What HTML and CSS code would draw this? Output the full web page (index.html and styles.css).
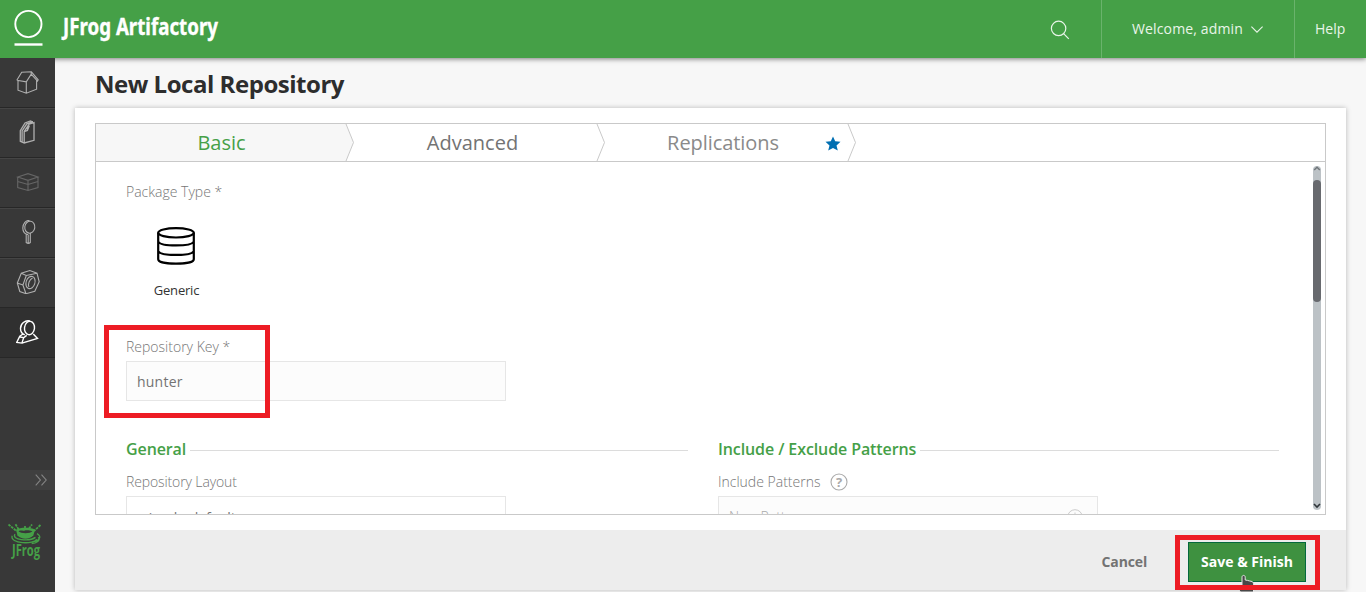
FILE: index.html
```html
<!DOCTYPE html>
<html lang="en">
<head>
<meta charset="utf-8">
<title>New Local Repository</title>
<link rel="stylesheet" href="styles.css">
</head>
<body>
<header class="topbar">
  <svg class="brand" width="230" height="58" viewBox="0 0 230 58">
    <circle cx="28.4" cy="24" r="13.1" fill="none" stroke="#fff" stroke-width="1.9"/>
    <path d="M14.5 44.5h28" stroke="#fff" stroke-width="2.4"/>
    <text class="brand-name" x="63" y="34.5" textLength="155" lengthAdjust="spacingAndGlyphs">JFrog Artifactory</text>
  </svg>
  <div class="top-search">
    <svg width="20" height="20" viewBox="0 0 20 20" fill="none" stroke="#e9f5e9" stroke-width="1.2"><circle cx="8.6" cy="8.4" r="7.2"/><path d="M13.6 13.6l5.2 5.2"/></svg>
  </div>
  <div class="top-user"><span class="user-name">Welcome, admin</span>
    <svg width="12" height="7" viewBox="0 0 12 7" fill="none" stroke="#e9f5e9" stroke-width="1.1"><path d="M.4.6L6 6.2 11.6.6"/></svg>
  </div>
  <div class="top-help">Help</div>
</header>
<div class="body">
  <nav class="sidebar">
    <a class="nav-item"><svg width="24" height="24" viewBox="0 0 24 24"><path d="M.8 10.2L5.7 2.2 15.4 1.8 22.2 9.8 21.5 11 15.2 4.2 10.3 11.8.8 10.2M2 10.8v9.4l8.3 3 10.3-4V9.8M10.3 12v11M15.2 4.2v-2"/></svg></a>
    <a class="nav-item"><svg width="24" height="24" viewBox="0 0 24 24"><path stroke-width="1.3" d="M8.2 23V11.5L13 4.2l5-1.5v17.6L8.2 23 4.3 21.4V10.7L9 3l5.5-2 1.8.8M6.1 22V11L10.8 3.8 17 1.6M11.4 7v4M8.2 11.6l3.2-1.2 2-5M16 .9v2.2"/></svg></a>
    <a class="nav-item dim"><svg width="24" height="24" viewBox="0 0 24 24"><path d="M1.700 7L12 3.700 22 7 12 10.300zM1.700 7v10.500l10.300 3 10-3V7M12 10.300v10.200M1.700 11.500l10.300 3 10-3"/></svg></a>
    <a class="nav-item"><svg width="24" height="24" viewBox="0 0 24 24"><ellipse cx="13.8" cy="7.2" rx="5" ry="6" transform="rotate(8 13.8 7.2)"/><path d="M13.5.5C9.8 0 7 3.5 6.8 8c0 4 1.5 6.1 5.5 6.6M10.2 14v8.5c1.2 1 3 1 4.1 0V13M12.2 15v8"/></svg></a>
    <a class="nav-item"><svg width="24" height="24" viewBox="0 0 24 24"><path d="M1.3 13L5.3 3.3 13.8.6 21 3.2l2.2 8.6-4.4 9.4L10 23.7 3.8 21.5zM5.3 3.3l5 2.2L6.9 15 10 23.7M10.3 5.5L21 3.2M1.3 13l5.6 2"/><ellipse cx="14.5" cy="12.5" rx="4.4" ry="6.3" transform="rotate(18 14.5 12.5)"/><path d="M16.5 8c-3 1.5-5 6-3.5 9"/></svg></a>
    <a class="nav-item active"><svg width="24" height="24" viewBox="0 0 24 24"><ellipse cx="13.5" cy="8" rx="5" ry="6.7" transform="rotate(8 13.5 8)"/><path d="M13.8 1C9 0 4.6 3.5 4.5 8.5c0 3 1.5 5.3 4.3 6.3M7 14L3.8 16.2.7 22.5l5.2.6 1.8-5.5 3-2.2M5.9 23.1l15.6-4.7-4.2-4.4M4 17l3.7.6"/></svg></a>
    <div class="nav-toggle"><svg width="12" height="12" viewBox="0 0 12 12" fill="none" stroke="#858585" stroke-width="1.1"><path d="M.7.7L5.4 6 .7 11.3M6.5.7L11.2 6 6.5 11.3"/></svg></div>
    <div class="nav-logo">
      <svg width="36" height="42" viewBox="0 0 36 42">
        <path d="M9 6.8c4-2.6 15-2.6 19 0l-1.6 5.4c-3.4 4.6-12.6 4.6-16 0z" fill="#45a047"/>
        <path d="M11.5 8.2c3-1.4 4 .2 7-1 3-.2 4 0 7 1-2 2.6-12 2.6-14 0z" fill="#383838"/>
        <path d="M1.5 1.5L9.5 8M8.5 1.2l3 5M22 5.5l3-4M33.5 2L27 8M18 5.5V2" stroke="#45a047" stroke-width="1.8" stroke-dasharray="2.6 .8"/>
        <path d="M8 11.2c-4 5.5 14 7.8 20.5 3.2M5.2 12.8c-3 8 22 9 24.5 3.4M30 10.6c6 3.4 1 7-2.5 8M31.2 14.2c3 3-2 6.2-6.5 6.3" fill="none" stroke="#45a047" stroke-width="1.3"/>
        <text class="frog-name" x="5" y="33" textLength="28" lengthAdjust="spacingAndGlyphs">JFrog</text>
      </svg>
    </div>
  </nav>
  <main class="main">
    <h1 class="title">New Local Repository</h1>
    <section class="panel">
      <div class="wizard">
        <div class="tabs">
          <div class="tab selected">Basic<svg class="arrow" width="10" height="37" viewBox="0 0 10 37"><path d="M1 0l7.5 18.5L1 37"/></svg></div>
          <div class="tab">Advanced<svg class="arrow" width="10" height="37" viewBox="0 0 10 37"><path d="M1 0l7.5 18.5L1 37"/></svg></div>
          <div class="tab muted">Replications
            <svg class="star" width="16" height="15" viewBox="0 0 16 15"><path fill="#006fb2" d="M8 .5l2.2 4.8 5.3.5-4 3.6 1.3 5.2L8 12l-4.8 2.6 1.3-5.2-4-3.6 5.3-.5z"/></svg>
            <svg class="arrow" width="10" height="37" viewBox="0 0 10 37"><path d="M1 0l7.5 18.5L1 37"/></svg></div>
        </div>
        <div class="viewport">
          <div class="form">
            <div class="label package-label">Package Type *</div>
            <div class="package">
              <svg width="40" height="40" viewBox="0 0 40 40" fill="none" stroke="#000" stroke-width="2.2"><ellipse cx="20" cy="6.8" rx="17.8" ry="4.7"/><path d="M2.2 6.8v26.4c0 6 35.6 6 35.6 0V6.8M2.2 15.7c3 5 32.6 5 35.6 0M2.2 25.2c3 5 32.6 5 35.6 0"/></svg>
              <span>Generic</span>
            </div>
            <div class="label key-label">Repository Key *</div>
            <div class="input key">hunter</div>
            <div class="columns">
              <div class="column">
                <h2 class="section">General</h2>
                <div class="label layout-label">Repository Layout</div>
                <div class="input white">simple-default</div>
              </div>
              <div class="column">
                <h2 class="section">Include / Exclude Patterns</h2>
                <div class="label">Include Patterns <svg width="18" height="18" viewBox="0 0 18 18"><circle cx="9" cy="9" r="8" fill="none" stroke="#aaa" stroke-width="1.1"/><text class="mark" x="9" y="13.6">?</text></svg></div>
                <div class="input placeholder">New Pattern<svg width="16" height="16" viewBox="0 0 16 16" fill="none" stroke="#ccc"><circle cx="8" cy="8" r="7.3"/><path d="M8 3.5v9M3.5 8h9"/></svg></div>
              </div>
            </div>
          </div>
          <div class="scrollbar">
            <svg width="8" height="8" viewBox="0 0 8 8" fill="none" stroke="#70767a" stroke-width="1.4"><path d="M1.2 4L4 1.2 6.8 4"/></svg>
            <div class="thumb"></div>
            <svg class="down" width="8" height="8" viewBox="0 0 8 8" fill="none" stroke="#30363a" stroke-width="1.6"><path d="M1 2l3 3 3-3"/></svg>
          </div>
        </div>
      </div>
      <footer class="actions"><span class="cancel">Cancel</span><button class="save">Save &amp; Finish</button></footer>
    </section>
  </main>
</div>
<svg class="cursor" width="20" height="18" viewBox="0 0 20 18"><path d="M6 3.200c0-2.400 3.200-2.400 3.200 0V6l2.300.4 2.200.6 2.300.5c1.200.5 1.500 1.400 1.500 3V18H4.500L1 13.500c-.8-1.500.5-2.500 2-1.500l3 2z" fill="#484848" stroke="#e8e8e8"/></svg>
<div class="highlight key-highlight"></div>
<div class="highlight save-highlight"></div>
</body>
</html>
```
FILE: styles.css
```css
* { box-sizing: border-box; }
body {
  margin: 0;
  height: 592px;
  overflow: hidden;
  display: flex;
  flex-direction: column;
  background: #f7f7f7;
  font: 14px/20px "Open Sans", sans-serif;
  color: #737373;
}
svg { flex: none; }
.topbar {
  height: 58px;
  flex: none;
  display: flex;
  background: #45a047;
  color: #e9f5e9;
  box-shadow: 0 1px 5px rgba(0, 0, 0, .5);
  z-index: 1;
}
.brand { overflow: visible; }
.brand-name { font: 700 23.5px "Noto Sans", sans-serif; fill: #fff; stroke: #fff; stroke-width: .4px; }
.top-search { margin-left: auto; width: 51px; padding-top: 20px; }
.top-user {
  width: 193px;
  display: flex;
  align-items: center;
  gap: 8px;
  padding-left: 30px;
  border-left: 1px solid #6ab36c;
}
.user-name { letter-spacing: .14px; }
.top-help {
  width: 72px;
  display: flex;
  align-items: center;
  padding-left: 20px;
  border-left: 1px solid #6ab36c;
}
.body { flex: 1; min-height: 0; display: flex; }
.sidebar {
  width: 55px;
  flex: none;
  display: flex;
  flex-direction: column;
  background: #383838;
  z-index: 2;
}
.nav-item {
  height: 50px;
  flex: none;
  display: flex;
  align-items: center;
  justify-content: center;
  padding: 0 0 2px 1px;
  border-top: 1px solid #454545;
  border-bottom: 1px solid #272727;
}
.nav-item:first-child { border-top-color: #383838; }
.nav-item svg { fill: none; stroke: #b0b0b0; stroke-width: 1.1; }
.nav-item.dim svg { stroke: #666; }
.nav-item.active { background: #303030; border-top-color: #303030; }
.nav-item.active svg { stroke: #fff; stroke-width: 1.4; }
.nav-toggle {
  margin-top: 112px;
  height: 20px;
  flex: none;
  display: flex;
  align-items: center;
  justify-content: flex-end;
  padding-right: 8px;
  background: #404040;
}
.nav-logo { padding: 33px 0 0 7px; }
.nav-logo svg { display: block; overflow: visible; }
.frog-name { font: 700 15.5px "Open Sans", sans-serif; fill: #45a047; }
.main { flex: 1; padding: 0 20px; }
.title {
  margin: 0;
  height: 50px;
  padding: 9px 0 0 20px;
  font-size: 24px;
  line-height: 34px;
  letter-spacing: -.47px;
  color: #2d2d2d;
}
.panel { height: 482px; background: #fff; box-shadow: 0 0 5px rgba(0, 0, 0, .25); padding-top: 15px; }
.wizard { height: 392px; margin: 0 20px 15px; border: 1px solid #c9c9c9; }
.tabs { height: 38px; display: flex; border-bottom: 1px solid #c9c9c9; }
.tab {
  position: relative;
  width: 251px;
  display: flex;
  align-items: center;
  justify-content: center;
  font-size: 20px;
  color: #737373;
}
.tab.selected { background: #f7f7f7; color: #45a047; }
.tab.muted { color: #8a8a8a; padding-right: 1px; letter-spacing: -.07px; }
.arrow { position: absolute; left: 249px; top: 0; z-index: 1; fill: #fff; stroke: #c9c9c9; }
.selected .arrow { fill: #f7f7f7; }
.star { position: absolute; right: 8px; top: 12px; }
.viewport { height: 352px; overflow: hidden; display: flex; justify-content: space-between; }
.form { width: 1183px; padding: 20px 0 0 30px; }
.label {
  height: 20px;
  display: flex;
  align-items: center;
  gap: 6px;
  font-weight: 300;
  white-space: pre;
  color: #767676;
}
.layout-label { letter-spacing: -.12px; }
.package { width: 101px; height: 125px; padding: 24px 1px 0 0; display: flex; flex-direction: column; align-items: center; font-size: 13px; letter-spacing: -.2px; color: #333; }
.package span { margin: 14px 0 0 1px; }
.key-label { margin-top: 10px; }
.input {
  width: 380px;
  height: 40px;
  margin-top: 4px;
  padding: 0 10px;
  display: flex;
  align-items: center;
  border: 1px solid #e6e6e6;
  background: #fcfcfc;
}
.input.white { background: #fff; padding: 4px 10px 0 15px; }
.input.placeholder { justify-content: space-between; padding: 2px 14px 0 10px; font-weight: 300; color: #aaa; }
.key { padding-top: 2px; letter-spacing: .22px; }
.columns { display: grid; grid-template-columns: 562px 561px; gap: 30px; margin-top: 38px; }
.section {
  display: flex;
  align-items: center;
  gap: 4px;
  margin: 0 0 13px;
  font-size: 16px;
  line-height: 20px;
  font-weight: 600;
  letter-spacing: -.1px;
  color: #45a047;
}
.section::after { content: ""; flex: 1; border-top: 1px solid #dcdcdc; margin-top: 3px; }
.mark { font: 700 13px "Open Sans", sans-serif; text-anchor: middle; fill: #aaa; }
.scrollbar {
  width: 8px;
  height: 344px;
  margin: 4px 4px 0 0;
  display: flex;
  flex-direction: column;
  border-radius: 4px;
  background: #bcc2c6;
}
.thumb { height: 122px; margin-top: 6px; border-radius: 4px; background: #67696e; }
.down { margin-top: auto; }
.actions {
  height: 60px;
  display: flex;
  align-items: center;
  justify-content: flex-end;
  gap: 41px;
  padding: 4px 40px 0 0;
  background: #ededed;
  font-weight: 700;
}
.cancel { letter-spacing: -.15px; }
.save {
  width: 118px;
  height: 40px;
  padding: 0 0 2px;
  border: 1px solid #04693c;
  background: #3e9140;
  color: #fff;
  font: 700 14px "Open Sans", sans-serif;
}
.highlight { position: absolute; z-index: 5; border: 5px solid #ed1c24; }
.key-highlight { left: 104px; top: 325px; width: 166px; height: 93px; }
.save-highlight { left: 1175px; top: 535px; width: 145px; height: 55px; }
.cursor { position: absolute; left: 1236px; top: 574px; z-index: 4; }
```
